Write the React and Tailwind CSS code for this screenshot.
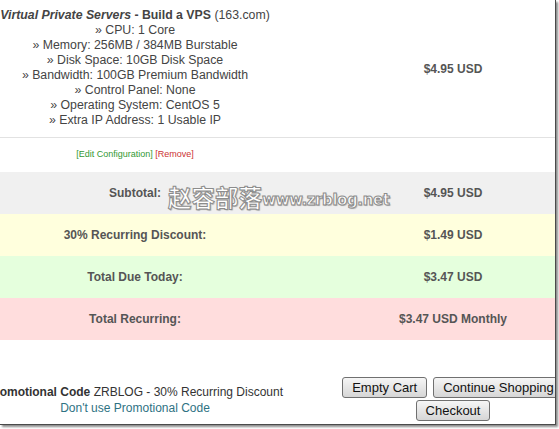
export default function App() {
  const lines = [
    "» CPU: 1 Core",
    "» Memory: 256MB / 384MB Burstable",
    "» Disk Space: 10GB Disk Space",
    "» Bandwidth: 100GB Premium Bandwidth",
    "» Control Panel: None",
    "» Operating System: CentOS 5",
    "» Extra IP Address: 1 Usable IP",
  ];
  const btn =
    "h-[21px] px-[9px] text-[13px] leading-none text-[#111] border border-[#707070] rounded-[3px] bg-gradient-to-b from-[#f6f6f6] via-[#e6e6e6] to-[#d6d6d6] font-['Liberation_Sans',Arial,sans-serif] whitespace-nowrap";
  return (
    <div className="w-[559px] h-[429px] bg-white relative overflow-hidden font-['Liberation_Sans',Arial,sans-serif]">
      <div className="w-[556px] h-[425px] border-r border-b border-[#4a4a4a] shadow-[2px_2px_2px_rgba(0,0,0,0.45)] overflow-hidden relative bg-white">
        <div className="ml-[-20px] w-[636px] flex flex-col">
          {/* product row */}
          <div className="flex h-[138px] border-b border-[#e2e2e2]">
            <div className="w-[310px] pt-[8px] text-center text-[12.3px] leading-[15px] text-[#444]">
              <div>
                <span className="font-bold italic">Virtual Private Servers</span>
                <span className="font-bold"> - Build a VPS</span>
                <span> (163.com)</span>
              </div>
              {lines.map((l) => (
                <div key={l}>{l}</div>
              ))}
            </div>
            <div className="w-[326px] flex items-center justify-center text-[12px] font-bold text-[#555]">
              $4.95 USD
            </div>
          </div>
          {/* edit row */}
          <div className="flex h-[34px] items-center">
            <div className="w-[310px] text-center text-[9px]">
              <span className="text-[#339933]">[Edit Configuration]</span>{" "}
              <span className="text-[#cc3333]">[Remove]</span>
            </div>
            <div className="w-[326px]" />
          </div>
          {/* totals */}
          {[
            ["Subtotal:", "$4.95 USD", "bg-[#f0f0f0]"],
            ["30% Recurring Discount:", "$1.49 USD", "bg-[#ffffdd]"],
            ["Total Due Today:", "$3.47 USD", "bg-[#e5ffdd]"],
            ["Total Recurring:", "$3.47 USD Monthly", "bg-[#ffdddd]"],
          ].map(([a, b, bg]) => (
            <div key={a} className={`flex h-[42px] items-center text-[12px] font-bold text-[#555] ${bg}`}>
              <div className="w-[310px] text-center">{a}</div>
              <div className="w-[326px] text-center">{b}</div>
            </div>
          ))}
          {/* promo / buttons */}
          <div className="flex pt-[37px]">
            <div className="w-[310px] flex flex-col items-center pt-[7px] text-[12px] leading-[16px] text-[#333]">
              <div className="whitespace-nowrap">
                <span className="font-bold">Promotional Code</span> ZRBLOG - 30% Recurring Discount
              </div>
              <div className="text-[#2e7283]">Don't use Promotional Code</div>
            </div>
            <div className="w-[326px] flex flex-col items-center gap-[2px]">
              <div className="flex gap-[6px]">
                <button className={btn}>Empty Cart</button>
                <button className={btn}>Continue Shopping</button>
              </div>
              <button className={btn}>Checkout</button>
            </div>
          </div>
        </div>
        {/* watermark */}
        <div className="absolute left-[168px] top-[180px] flex items-end whitespace-nowrap text-white [-webkit-text-stroke:1px_#8c8c8c] [text-shadow:1px_1px_1px_rgba(0,0,0,0.25)]">
          <span className="text-[23.5px] leading-[34px] font-bold font-['Noto_Sans_CJK_SC',sans-serif]">赵容部落</span>
          <span className="text-[15px] leading-[27px] font-bold font-['DejaVu_Sans',sans-serif] tracking-[-0.4px]">www.zrblog.net</span>
        </div>
      </div>
    </div>
  );
}
